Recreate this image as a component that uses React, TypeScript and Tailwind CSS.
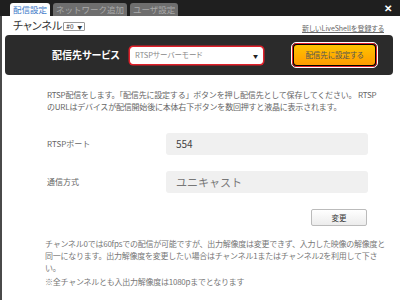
import React from "react";

const jp = "font-['Noto_Sans_CJK_JP',sans-serif]";
const palt = "[font-feature-settings:'palt']";

const Tab: React.FC<{ label: string; active?: boolean }> = ({ label, active }) => (
  <div
    className={`h-[13px] px-[3px] rounded-t-[3px] flex items-center text-[8.5px] leading-none ${
      active ? "bg-white text-[#3b78c8]" : "bg-[#6e6e6e] text-[#a9a9a9]"
    }`}
  >
    {label}
  </div>
);

const App: React.FC = () => {
  return (
    <div className={`w-[400px] h-[300px] bg-white overflow-hidden flex flex-col ${jp}`}>
      {/* Tabs */}
      <div className="h-[16px] bg-[#1f1f1f] flex items-end pl-[10px] pr-[6px] shrink-0">
        <div className="flex gap-[3px]">
          <Tab label="配信設定" active />
          <Tab label="ネットワーク追加" />
          <Tab label="ユーザ設定" />
        </div>
        <div className="ml-auto self-center text-white text-[10px] font-bold leading-none pr-[2px]">✕</div>
      </div>

      <div className="flex-1 border-l-[2px] border-[#4a4a4a] pl-[3px] pr-[7px]">
        {/* Channel row */}
        <div className={`h-[19px] flex items-center pl-[8px] ${palt}`}>
          <span className="text-[11px] text-[#333] leading-none">チャンネル</span>
          <div className="ml-[1px] mt-[2px] h-[9px] w-[22px] border border-[#999] rounded-[1px] bg-white flex items-center justify-between px-[2px] text-[6.5px] text-[#333] leading-none">
            <span>#0</span>
            <span className="text-[5px]">▼</span>
          </div>
          <a className="ml-auto mr-[9px] mt-[5px] text-[7px] text-[#666] underline leading-none">
            新しいLiveShellを登録する
          </a>
        </div>

        {/* Service panel */}
        <div className={`h-[40px] bg-[#2b2b2b] rounded-[4px] flex items-center ${palt}`}>
          <span className="ml-[47px] w-[66px] whitespace-nowrap text-[10px] font-bold text-white leading-none">配信先サービス</span>
          <div className="ml-[12px] w-[133px] h-[17px] rounded-[3px] border border-white ring-[1.5px] ring-[#e0202a] bg-white flex items-center justify-between px-[4px] text-[7.5px] text-[#888] leading-none">
            <span>RTSPサーバーモード</span>
            <span className="text-[5px] text-[#222]">▼</span>
          </div>
          <div className="ml-[29px] w-[85px] h-[24px] rounded-[4px] border-[1.5px] border-[#e0202a] outline outline-1 outline-white bg-black p-[1px]">
            <div className="w-full h-full rounded-[3px] bg-gradient-to-b from-[#ffc400] to-[#ff9a00] flex items-center justify-center text-[7.5px] text-[#555] leading-none">
              配信先に設定する
            </div>
          </div>
        </div>

        {/* Description */}
        <p className="mt-[14px] pl-[42px] whitespace-nowrap text-[8px] tracking-[-0.2px] leading-[12px] text-[#666]">
          RTSP配信をします。「配信先に設定する」ボタンを押し配信先として保存してください。 RTSP
          <br />
          のURLはデバイスが配信開始後に本体右下ボタンを数回押すと液晶に表示されます。
        </p>

        {/* Fields */}
        <div className="mt-[20px] pl-[42px] pr-[25px] flex flex-col gap-[16px]">
          <div className="flex items-center">
            <span className="w-[119px] text-[8px] text-[#666] leading-none">RTSPポート</span>
            <div className="flex-1 h-[22px] rounded-[3px] bg-[#f0f0f0] flex items-center pl-[10px] text-[10px] text-[#444] leading-none">
              554
            </div>
          </div>
          <div className="flex items-center">
            <span className="w-[119px] text-[8px] text-[#666] leading-none">通信方式</span>
            <div className="flex-1 h-[22px] rounded-[3px] bg-[#f0f0f0] flex items-center pl-[10px] text-[11px] text-[#777] leading-none">
              ユニキャスト
            </div>
          </div>
        </div>

        <div className="mt-[16px] flex justify-end pr-[26px]">
          <button className="w-[56px] h-[17px] border border-[#bbb] rounded-[2px] bg-gradient-to-b from-white to-[#ececec] text-[7.5px] text-[#333] leading-none">
            変更
          </button>
        </div>

        {/* Notes */}
        <div className="mt-[12px] pl-[40px] whitespace-nowrap text-[8px] tracking-[-0.25px] leading-[12px] text-[#777]">
          <p>
            チャンネル0では60fpsでの配信が可能ですが、出力解像度は変更できず、入力した映像の解像度と
            <br />
            同一になります。出力解像度を変更したい場合はチャンネル1またはチャンネル2を利用して下さ
            <br />
            い。
          </p>
          <p className="mt-[2px]">※全チャンネルとも入出力解像度は1080pまでとなります</p>
        </div>
      </div>
    </div>
  );
};

export default App;
